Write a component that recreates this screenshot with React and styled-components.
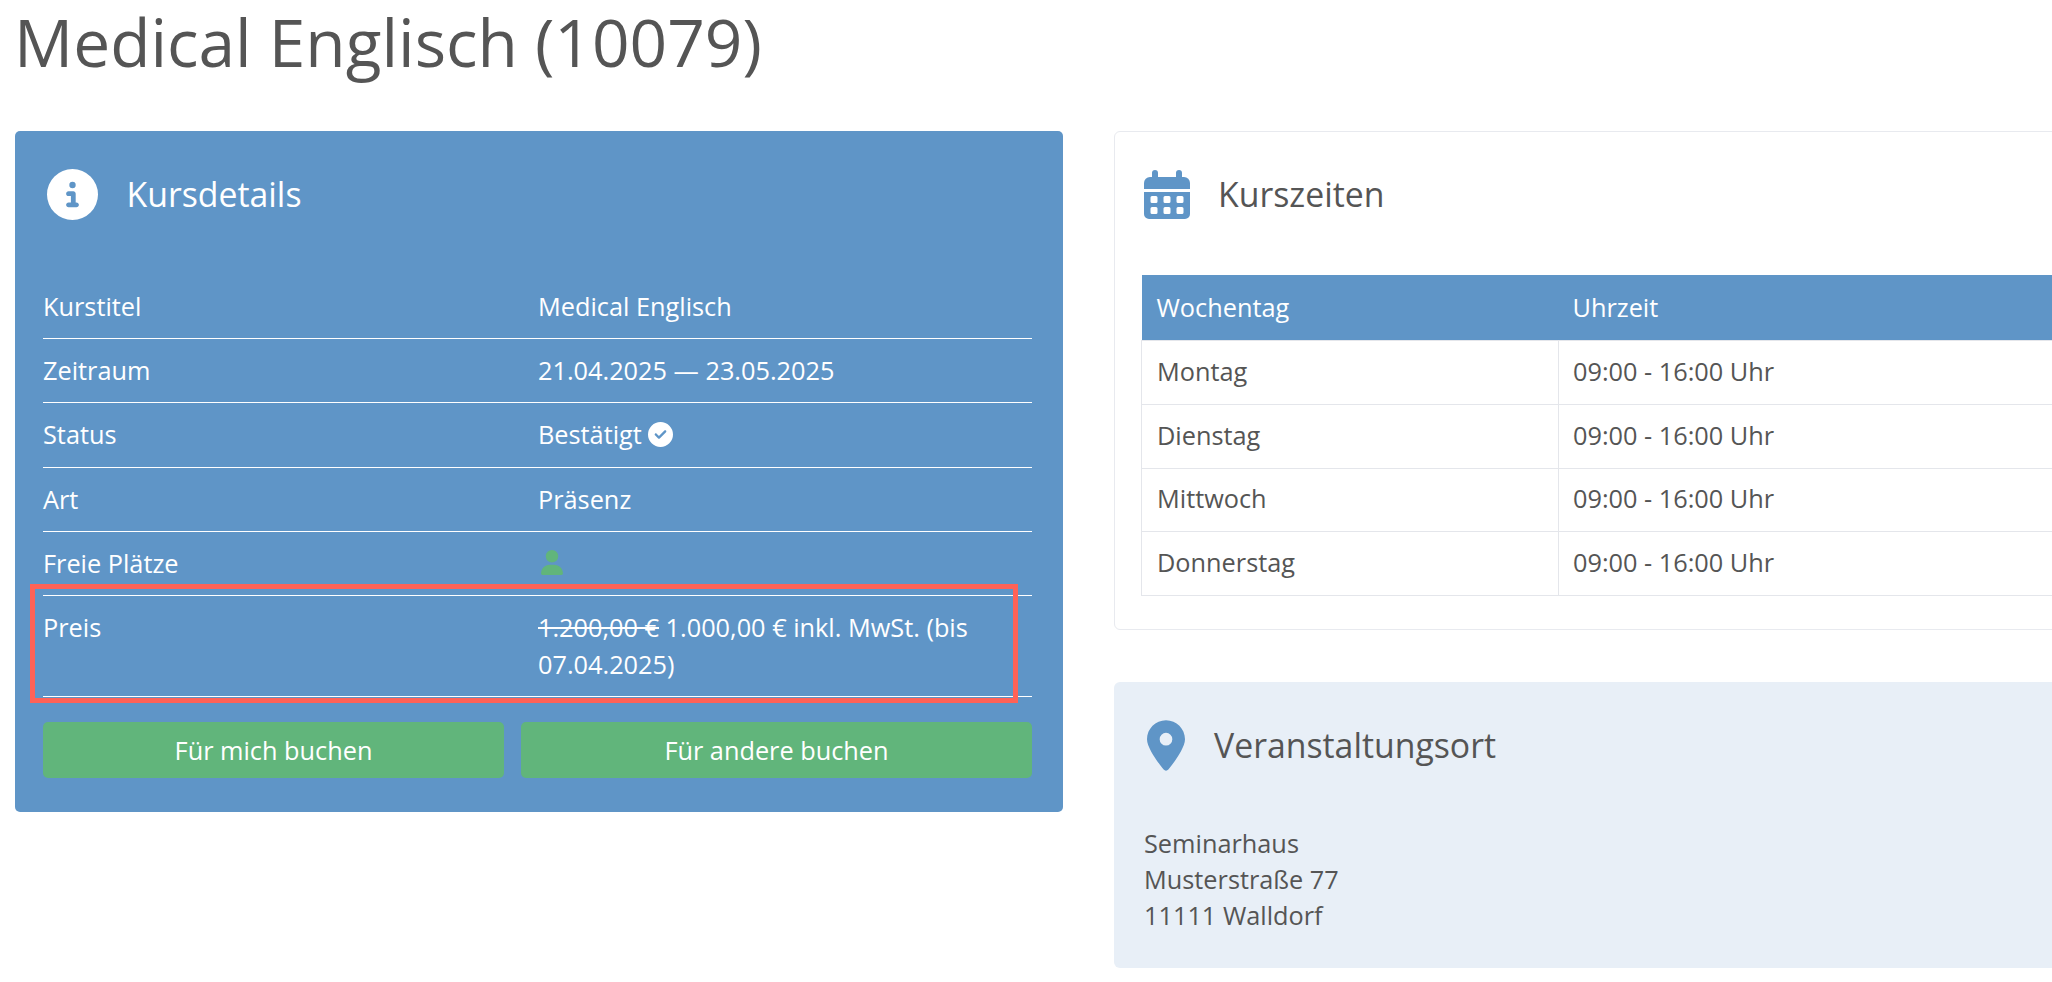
import React from "react";
import styled, { createGlobalStyle } from "styled-components";
import { FaCircleInfo, FaCircleCheck, FaUser, FaLocationDot } from "react-icons/fa6";

const BLUE = "#5f95c7";
const GREEN = "#61b57b";
const TEXT = "#555555";

const details = [
  { label: "Kurstitel", value: "Medical Englisch" },
  { label: "Zeitraum", value: "21.04.2025 — 23.05.2025" },
  { label: "Status", value: <>Bestätigt <CheckIcon /></> },
  { label: "Art", value: "Präsenz" },
  { label: "Freie Plätze", value: <SeatIcon /> },
];

const times = ["Montag", "Dienstag", "Mittwoch", "Donnerstag"];

function CheckIcon() {
  return <StatusIcon />;
}

function SeatIcon() {
  return <PersonIcon />;
}

function CalendarIcon() {
  return (
    <CalendarSvg viewBox="0 0 46 49" aria-hidden="true">
      <path d="M11 0a3 3 0 0 1 3 3v4h18V3a3 3 0 0 1 6 0v4h2a6 6 0 0 1 6 6v6H0v-6a6 6 0 0 1 6-6h2V3a3 3 0 0 1 3-3z" />
      <path
        fillRule="evenodd"
        d="M0 22h46v22a5 5 0 0 1-5 5H5a5 5 0 0 1-5-5zM8 26a1.5 1.5 0 0 0-1.5 1.5v4A1.5 1.5 0 0 0 8 33h4a1.5 1.5 0 0 0 1.5-1.5v-4A1.5 1.5 0 0 0 12 26zm13 0a1.5 1.5 0 0 0-1.5 1.5v4A1.5 1.5 0 0 0 21 33h4a1.5 1.5 0 0 0 1.5-1.5v-4A1.5 1.5 0 0 0 25 26zm13 0a1.5 1.5 0 0 0-1.5 1.5v4A1.5 1.5 0 0 0 34 33h4a1.5 1.5 0 0 0 1.5-1.5v-4A1.5 1.5 0 0 0 38 26zM8 37a1.5 1.5 0 0 0-1.5 1.5v4A1.5 1.5 0 0 0 8 44h4a1.5 1.5 0 0 0 1.5-1.5v-4A1.5 1.5 0 0 0 12 37zm13 0a1.5 1.5 0 0 0-1.5 1.5v4A1.5 1.5 0 0 0 21 44h4a1.5 1.5 0 0 0 1.5-1.5v-4A1.5 1.5 0 0 0 25 37zm13 0a1.5 1.5 0 0 0-1.5 1.5v4A1.5 1.5 0 0 0 34 44h4a1.5 1.5 0 0 0 1.5-1.5v-4A1.5 1.5 0 0 0 38 37z"
      />
    </CalendarSvg>
  );
}

export default function App() {
  return (
    <Page>
      <GlobalStyle />
      <Title>Medical Englisch (10079)</Title>
      <Columns>
        <DetailsPanel>
          <PanelHead>
            <InfoIcon />
            <DetailsHeading>Kursdetails</DetailsHeading>
          </PanelHead>
          {details.map((row) => (
            <DetailRow key={row.label}>
              <span>{row.label}</span>
              <span>{row.value}</span>
            </DetailRow>
          ))}
          <PriceRow>
            <span>Preis</span>
            <span>
              <s>1.200,00 €</s> 1.000,00 € inkl. MwSt. (bis 07.04.2025)
            </span>
            <Highlight />
          </PriceRow>
          <Buttons>
            <BookButton type="button">Für mich buchen</BookButton>
            <BookButton type="button">Für andere buchen</BookButton>
          </Buttons>
        </DetailsPanel>

        <SideColumn>
          <TimesCard>
            <TimesHead>
              <CalendarIcon />
              <SideHeading>Kurszeiten</SideHeading>
            </TimesHead>
            <TimesTable>
              <thead>
                <tr>
                  <HeadCell>Wochentag</HeadCell>
                  <HeadCell>Uhrzeit</HeadCell>
                </tr>
              </thead>
              <tbody>
                {times.map((day) => (
                  <tr key={day}>
                    <BodyCell>{day}</BodyCell>
                    <BodyCell>09:00 - 16:00 Uhr</BodyCell>
                  </tr>
                ))}
              </tbody>
            </TimesTable>
          </TimesCard>

          <VenueCard>
            <VenueHead>
              <PinIcon />
              <SideHeading>Veranstaltungsort</SideHeading>
            </VenueHead>
            <Address>
              Seminarhaus
              <br />
              Musterstraße 77
              <br />
              11111 Walldorf
            </Address>
          </VenueCard>
        </SideColumn>
      </Columns>
    </Page>
  );
}

const GlobalStyle = createGlobalStyle`
  html, body {
    margin: 0;
    height: 100%;
    overflow: hidden;
    background: #fff;
  }
`;

const Page = styled.div`
  width: 2200px;
  padding: 0 0 0 15px;
  font-family: "Open Sans", sans-serif;
  font-size: 25.3px;
  line-height: 37px;
  color: ${TEXT};
`;

const Title = styled.h1`
  margin: 0 0 0 -1px;
  height: 131px;
  box-sizing: border-box;
  font-size: 65.8px;
  line-height: 84px;
  font-weight: 400;
`;

const Columns = styled.div`
  display: grid;
  grid-template-columns: 1048px 1000px;
  column-gap: 51px;
  align-items: start;
`;

const DetailsPanel = styled.section`
  box-sizing: border-box;
  height: 681px;
  padding: 0 31px 0 28px;
  background: ${BLUE};
  border-radius: 5px;
  color: #fff;
`;

const PanelHead = styled.header`
  display: flex;
  align-items: center;
  gap: 28.5px;
  height: 144px;
  padding: 0 0 17px 4px;
  box-sizing: border-box;
`;

const InfoIcon = styled(FaCircleInfo)`
  width: 51px;
  height: 51px;
  color: #fff;
`;

const DetailsHeading = styled.h2`
  margin: 0;
  padding-bottom: 2px;
  font-size: 33.8px;
  line-height: 44px;
  font-weight: 400;
`;

const SideHeading = styled(DetailsHeading)`
  color: ${TEXT};
`;

const DetailRow = styled.div`
  display: grid;
  grid-template-columns: 495px 1fr;
  box-sizing: border-box;
  height: 64.2px;
  padding-top: 13px;
  border-bottom: 1px solid #fff;
`;

const PriceRow = styled(DetailRow)`
  position: relative;
  height: 101.2px;
`;

const Highlight = styled.div`
  position: absolute;
  left: -13px;
  right: 14px;
  top: -12px;
  bottom: -7px;
  border: 5px solid #ff6257;
  pointer-events: none;
`;

const StatusIcon = styled(FaCircleCheck)`
  width: 25px;
  height: 25px;
  vertical-align: -3px;
  color: #fff;
`;

const PersonIcon = styled(FaUser)`
  width: 22px;
  height: 25px;
  vertical-align: -2px;
  margin-left: 3px;
  color: ${GREEN};
`;

const Buttons = styled.div`
  display: grid;
  grid-template-columns: 461px 1fr;
  column-gap: 17px;
  margin-top: 25px;
`;

const BookButton = styled.button`
  height: 56px;
  padding: 0;
  border: none;
  border-radius: 5px;
  background: ${GREEN};
  color: #fff;
  font: inherit;
`;

const SideColumn = styled.div`
  display: flex;
  flex-direction: column;
  gap: 52px;
`;

const TimesCard = styled.section`
  box-sizing: border-box;
  height: 499px;
  padding: 0 26px 0 26px;
  background: #fff;
  border: 1px solid #e8eaef;
  border-radius: 6px;
`;

const TimesHead = styled.header`
  display: flex;
  align-items: center;
  gap: 28px;
  height: 143px;
  padding: 0 0 18px 3px;
  box-sizing: border-box;
`;

const CalendarSvg = styled.svg`
  width: 46px;
  height: 49px;
  fill: ${BLUE};
`;

const TimesTable = styled.table`
  width: 100%;
  table-layout: fixed;
  border-collapse: collapse;
`;

const HeadCell = styled.th`
  height: 65px;
  padding: 0 15px;
  background: ${BLUE};
  color: #fff;
  font-weight: 400;
  text-align: left;
  &:first-child {
    width: 417px;
    box-sizing: border-box;
  }
  &:last-child {
    padding-left: 14px;
  }
`;

const BodyCell = styled.td`
  height: 63.8px;
  padding: 0 15px 2px;
  box-sizing: border-box;
  border: 1px solid #e4e6eb;
  &:last-child {
    padding-left: 14px;
  }
`;

const VenueCard = styled.section`
  box-sizing: border-box;
  height: 286px;
  padding: 0 30px;
  background: #e8eff7;
  border-radius: 6px;
`;

const VenueHead = styled.header`
  display: flex;
  align-items: center;
  gap: 29px;
  height: 127px;
  padding: 0 0 0 3px;
  box-sizing: border-box;
`;

const PinIcon = styled(FaLocationDot)`
  width: 38px;
  height: 51px;
  color: ${BLUE};
`;

const Address = styled.p`
  margin: 16px 0 0;
  line-height: 36.2px;
`;
